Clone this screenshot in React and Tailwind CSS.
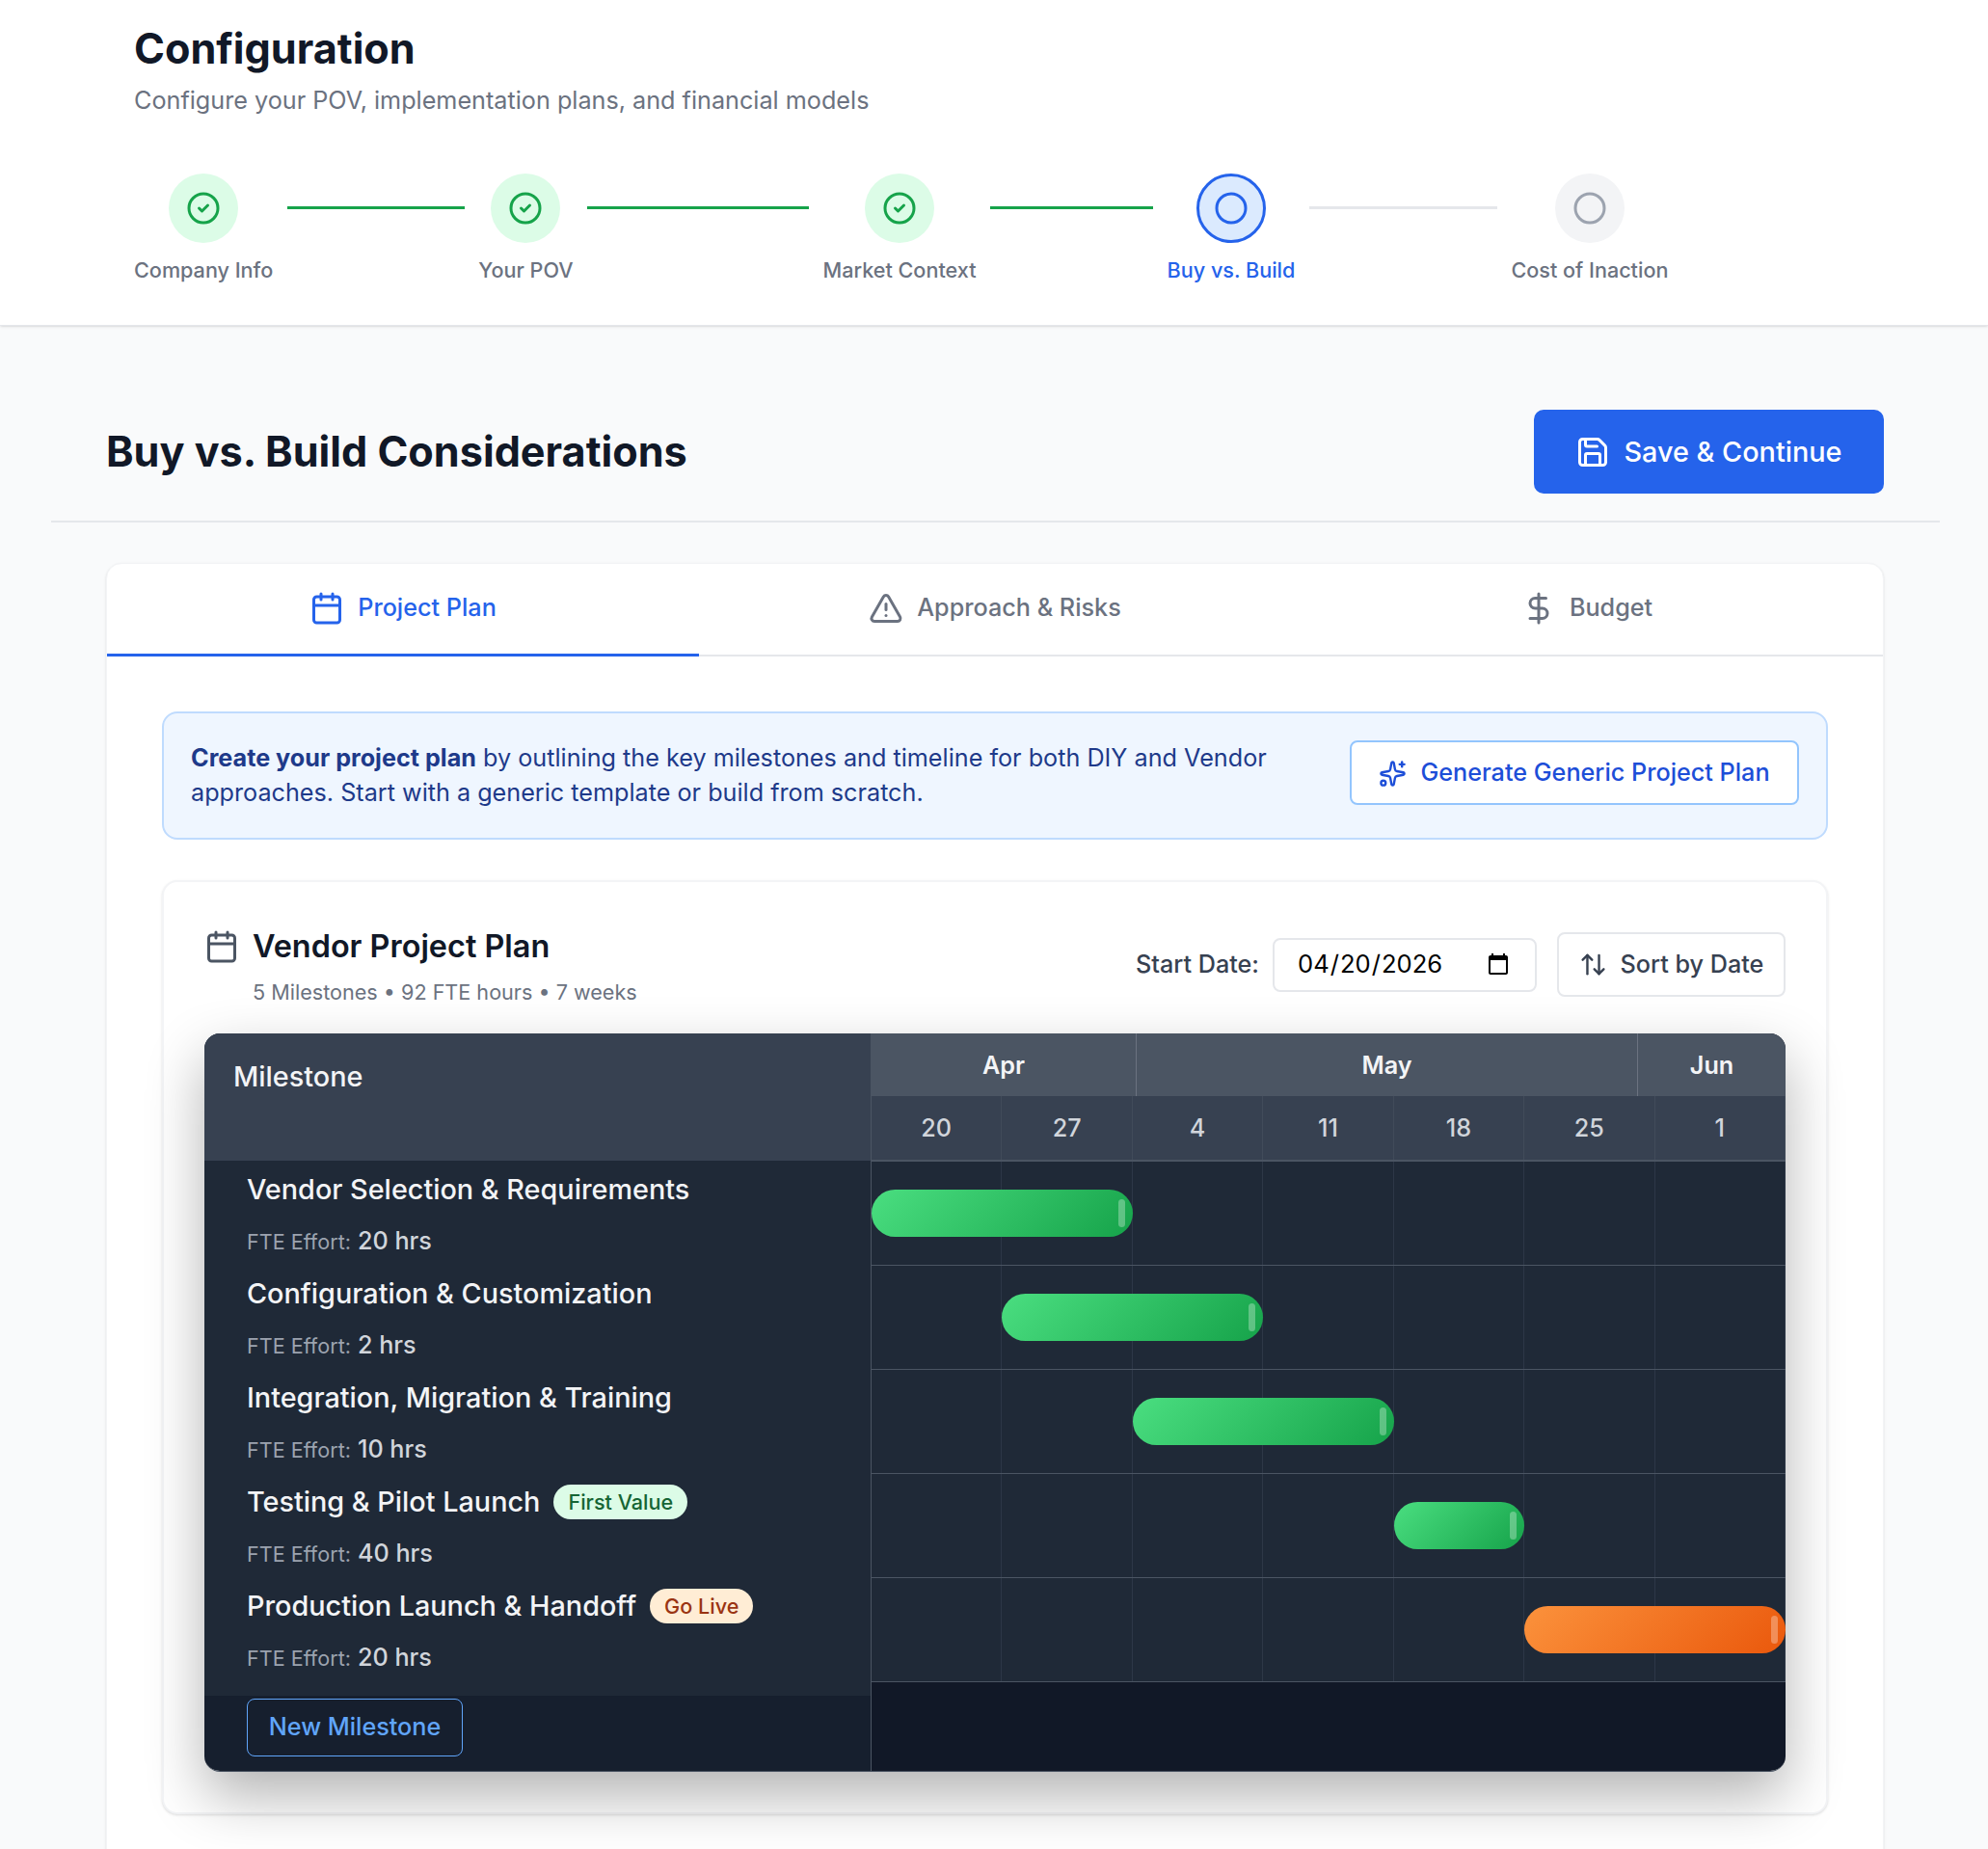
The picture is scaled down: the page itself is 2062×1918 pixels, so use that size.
import React from 'react';
import { CircleCheck, Circle, Save, Calendar, TriangleAlert, DollarSign, Sparkles, ArrowUpDown } from 'lucide-react';

const steps = [
  { label: 'Company Info', state: 'done', line: 'w-[184px] bg-[#16a34a]' },
  { label: 'Your POV', state: 'done', line: 'w-[230px] bg-[#16a34a]' },
  { label: 'Market Context', state: 'done', line: 'w-[169px] bg-[#16a34a]' },
  { label: 'Buy vs. Build', state: 'current', line: 'w-[195px] bg-[#e5e7eb]' },
  { label: 'Cost of Inaction', state: 'todo' },
];

const milestones = [
  { name: 'Vendor Selection & Requirements', hrs: '20 hrs', bar: 'col-start-1 col-span-2', color: 'green' },
  { name: 'Configuration & Customization', hrs: '2 hrs', bar: 'col-start-2 col-span-2', color: 'green' },
  { name: 'Integration, Migration & Training', hrs: '10 hrs', bar: 'col-start-3 col-span-2', color: 'green' },
  { name: 'Testing & Pilot Launch', hrs: '40 hrs', bar: 'col-start-5 col-span-1', color: 'green', badge: 'First Value' },
  { name: 'Production Launch & Handoff', hrs: '20 hrs', bar: 'col-start-6 col-span-2', color: 'orange', badge: 'Go Live' },
];

const weeks = ['20', '27', '4', '11', '18', '25', '1'];
const colStarts = ['col-start-1', 'col-start-2', 'col-start-3', 'col-start-4', 'col-start-5', 'col-start-6', 'col-start-7'];

function Step({ step }) {
  return (
    <div className="flex flex-col items-center">
      <div className={`w-[72px] h-[72px] rounded-full flex items-center justify-center ${
        step.state === 'done' ? 'bg-[#dcfce7] text-[#16a34a]' :
        step.state === 'current' ? 'bg-[#dbeafe] text-[#2563eb] border-[3px] border-[#2563eb]' :
        'bg-[#f3f4f6] text-[#9ca3af]'
      }`}>
        {step.state === 'done' ? <CircleCheck size={36} /> : <Circle size={36} />}
      </div>
      <span className={`mt-[12px] text-[21.6px] leading-[32px] font-medium whitespace-nowrap ${
        step.state === 'current' ? 'text-[#2563eb]' : 'text-[#6b7280]'
      }`}>
        {step.label}
      </span>
    </div>
  );
}

function Badge({ text }) {
  return (
    <span className={`ml-[14px] px-[15px] h-[36px] flex items-center rounded-full text-[21.6px] font-medium ${
      text === 'Go Live' ? 'bg-[#ffedd5] text-[#9a3412]' : 'bg-[#dcfce7] text-[#166534]'
    }`}>
      {text}
    </span>
  );
}

function MilestoneRow({ m }) {
  return (
    <div className="h-[108px] pl-[44px] pt-[12px]">
      <div className="flex items-center h-[36px]">
        <span className="text-[28.8px] font-medium text-[#f3f4f6] whitespace-nowrap">{m.name}</span>
        {m.badge && <Badge text={m.badge} />}
      </div>
      <div className="flex items-baseline mt-[17px] leading-[36px]">
        <span className="text-[21.6px] text-[#9ca3af]">FTE Effort:</span>
        <span className="ml-[7px] text-[25.2px] font-medium text-[#d1d5db]">{m.hrs}</span>
      </div>
    </div>
  );
}

function TimelineRow({ m }) {
  return (
    <div className="h-[108px] grid grid-cols-7 border-b border-[#4b5563] bg-[#1f2937]">
      {weeks.map((w, i) => (
        <div key={w} className={`row-start-1 border-r border-[#374151]/60 ${colStarts[i]}`} />
      ))}
      <div className={`row-start-1 self-center relative h-[49px] rounded-full ${m.bar} ${
        m.color === 'orange' ? 'bg-[linear-gradient(135deg,#fb923c,#ea580c)]' : 'bg-[linear-gradient(135deg,#4ade80,#16a34a)]'
      }`}>
        <div className="absolute right-[8px] top-[10px] w-[7px] h-[29px] rounded-full bg-white/30" />
      </div>
    </div>
  );
}

export default function App() {
  return (
    <div className="h-[1918px] overflow-hidden bg-[#f9fafb] font-['Inter',sans-serif]">
      <header className="h-[338px] bg-white border-b border-[#e5e7eb] shadow-sm pl-[139px] pt-[20px]">
        <h1 className="text-[43.2px] leading-[60px] font-bold text-[#111827]">Configuration</h1>
        <p className="mt-[6px] text-[25.2px] leading-[36px] text-[#6b7280]">Configure your POV, implementation plans, and financial models</p>
        <div className="flex items-start mt-[58px]">
          {steps.map((step) => (
            <React.Fragment key={step.label}>
              <Step step={step} />
              {step.line && <div className={`h-[3px] mt-[34px] mx-[14.5px] ${step.line}`} />}
            </React.Fragment>
          ))}
        </div>
      </header>

      <main className="pl-[53px] pr-[50px] pt-[86px]">
        <div className="flex items-center justify-between h-[118px] pl-[57px] pr-[58px] pb-[28px] border-b-2 border-[#e5e7eb]">
          <h2 className="text-[43.2px] font-bold text-[#111827]">Buy vs. Build Considerations</h2>
          <button className="h-[87px] w-[363px] pt-[2px] flex items-center justify-center gap-[14px] rounded-[10px] bg-[#2563eb] text-white text-[28.8px] font-medium">
            <Save size={36} />
            Save &amp; Continue
          </button>
        </div>

        <div className="mt-[42px] ml-[57px] mr-[58px] h-[1400px] overflow-hidden bg-white rounded-2xl border border-[#f3f4f6] shadow-sm">
          <div className="flex h-[96px] border-b-2 border-[#e5e7eb]">
            <div className="flex-1 -mb-[2px] pb-[2px] flex items-center justify-center gap-[14px] border-b-[3px] border-[#2563eb] text-[#2563eb] text-[25.2px] font-medium">
              <Calendar size={36} />
              Project Plan
            </div>
            <div className="flex-1 pb-[2px] flex items-center justify-center gap-[14px] text-[#6b7280] text-[25.2px] font-medium">
              <TriangleAlert size={36} />
              Approach &amp; Risks
            </div>
            <div className="flex-1 pb-[2px] flex items-center justify-center gap-[14px] text-[#6b7280] text-[25.2px] font-medium">
              <DollarSign size={36} />
              Budget
            </div>
          </div>

          <div className="px-[57px] pt-[57px]">
            <div className="h-[133px] flex items-center justify-between pl-[28px] pr-[28px] rounded-2xl bg-[#eff6ff] border-2 border-[#bfdbfe]">
              <p className="pb-[2px] text-[25.2px] leading-[36px] text-[#1e3a8a] w-[1200px]">
                <strong className="font-bold">Create your project plan</strong> by outlining the key milestones and timeline for both DIY and Vendor approaches. Start with a generic template or build from scratch.
              </p>
              <button className="mb-[7px] pt-[2px] h-[67px] w-[466px] flex items-center justify-center gap-[14px] rounded-lg bg-white border-2 border-[#93c5fd] text-[#1d4ed8] text-[25.2px] font-medium whitespace-nowrap">
                <Sparkles size={29} />
                Generate Generic Project Plan
              </button>
            </div>

            <div className="mt-[42px] h-[969px] rounded-2xl bg-white border-2 border-[#f3f4f6] shadow-sm pl-[42px] pr-[42px] pt-[42px]">
              <div className="flex items-start justify-between h-[115px]">
                <div className="pt-[3px]">
                  <div className="flex items-center gap-[14px]">
                    <Calendar size={36} className="text-[#4b5563]" />
                    <h3 className="text-[32.4px] leading-[44px] font-semibold text-[#111827]">Vendor Project Plan</h3>
                  </div>
                  <p className="ml-[50px] mt-[9px] text-[21.6px] leading-[32px] text-[#6b7280]">5 Milestones • 92 FTE hours • 7 weeks</p>
                </div>
                <div className="flex items-center pt-[10px]">
                  <span className="text-[25.2px] font-medium text-[#374151]">Start Date:</span>
                  <input type="date" defaultValue="2026-04-20" className="ml-[14px] w-[274px] h-[56px] px-[23px] rounded-lg border-2 border-[#e5e7eb] bg-white text-[25.6px] text-black" />
                  <button className="ml-[21px] w-[237px] h-[67px] flex items-center justify-center gap-[14px] rounded-lg border-2 border-[#e5e7eb] bg-white text-[#374151] text-[25.2px] font-medium">
                    <ArrowUpDown size={29} />
                    Sort by Date
                  </button>
                </div>
              </div>

              <div className="flex h-[766px] rounded-2xl overflow-hidden shadow-[0_25px_60px_rgba(0,0,0,0.3)] border-b border-[#4b5563]">
                <div className="w-[692px] border-r border-[#4b5563] bg-[#161f2e] flex flex-col">
                  <div className="h-[132px] pl-[30px] pt-[23px] bg-[#374151] text-[28.8px] font-medium text-[#f3f4f6]">Milestone</div>
                  <div className="pb-[15px] bg-[#1f2937]">
                    {milestones.map((m) => <MilestoneRow key={m.name} m={m} />)}
                  </div>
                  <div className="flex-1 pl-[44px] pt-[3px]">
                    <button className="w-[224px] h-[60px] rounded-lg border border-[#60a5fa] text-[#60a5fa] text-[25.2px] font-medium">New Milestone</button>
                  </div>
                </div>
                <div className="flex-1 flex flex-col bg-[#111827]">
                  <div className="flex h-[65px] bg-[#4b5563] text-[25.2px] font-semibold text-[#f3f4f6]">
                    <div className="w-[275px] pt-[3px] flex items-center justify-center border-r border-[#6b7280]">Apr</div>
                    <div className="w-[520px] pt-[3px] flex items-center justify-center border-r border-[#6b7280]">May</div>
                    <div className="flex-1 pt-[3px] flex items-center justify-center">Jun</div>
                  </div>
                  <div className="grid grid-cols-7 h-[68px] bg-[#374151] border-b-2 border-[#4b5563] text-[25.2px] font-medium text-[#d1d5db]">
                    {weeks.map((w) => (
                      <div key={w} className="pt-[2px] flex items-center justify-center border-r border-[#4b5563]/50">{w}</div>
                    ))}
                  </div>
                  {milestones.map((m) => <TimelineRow key={m.name} m={m} />)}
                </div>
              </div>
            </div>
          </div>
        </div>
      </main>
    </div>
  );
}
